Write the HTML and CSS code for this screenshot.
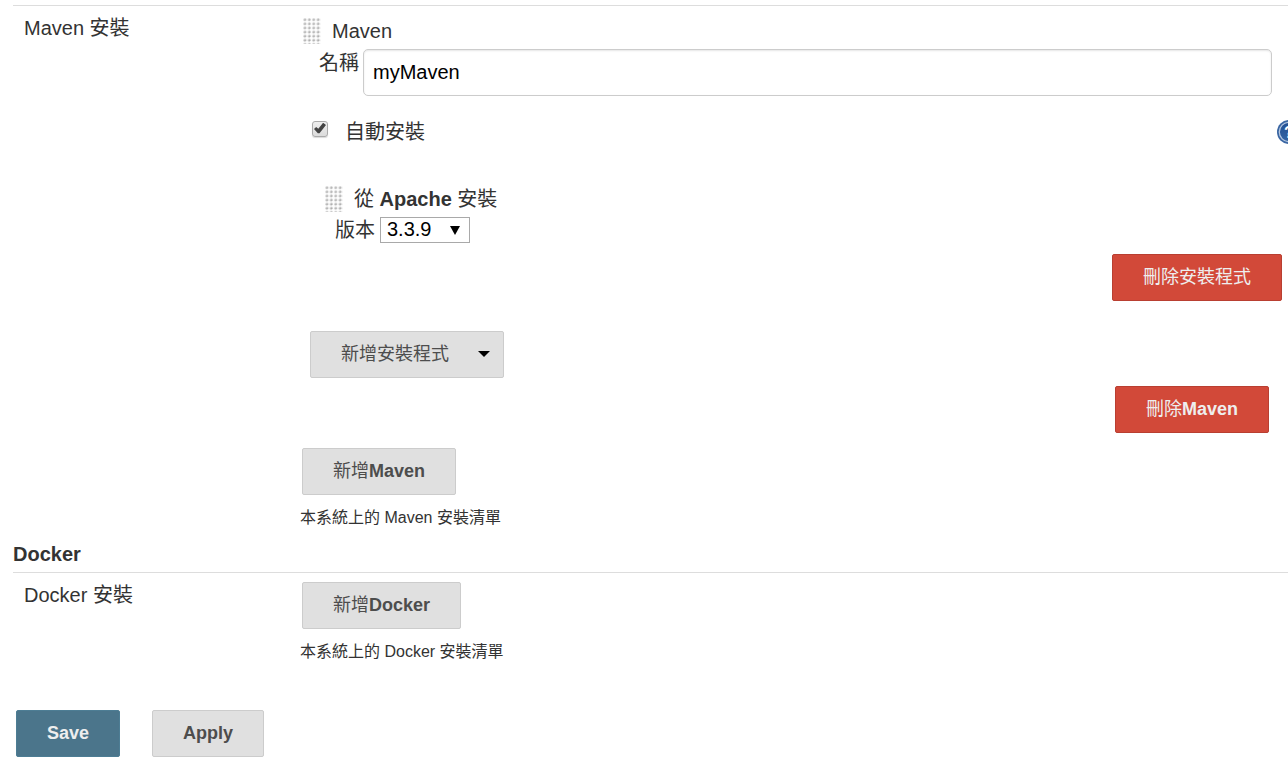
FILE: index.html
```
<!DOCTYPE html>
<html lang="zh-TW">
<head>
<meta charset="utf-8">
<title>Global Tool Configuration</title>
<link rel="stylesheet" href="styles.css">
</head>
<body>

<svg width="0" height="0" class="defs" aria-hidden="true">
  <defs>
    <linearGradient id="dot" x1="0" y1="0" x2="1" y2="1">
      <stop offset="0" stop-color="#f0f0f0"/>
      <stop offset="1" stop-color="#8c8c8c"/>
    </linearGradient>
    <pattern id="dots" width="4.4" height="4.1" patternUnits="userSpaceOnUse">
      <rect x="0.3" y="0.3" width="2.8" height="2.6" rx="1" fill="url(#dot)"/>
    </pattern>
    <linearGradient id="ball" x1="0" y1="0" x2="0" y2="1">
      <stop offset="0" stop-color="#224f92"/>
      <stop offset="1" stop-color="#3465a4"/>
    </linearGradient>
  </defs>
</svg>

<form id="config" name="config" onsubmit="return false">

<div class="section-row first">
  <div class="setting-name">Maven 安裝</div>
  <div class="setting-main">
    <div class="tool">
      <div class="drag-header">
        <svg class="grip" width="18" height="26"><rect width="18" height="26" fill="url(#dots)"/></svg>
        <span>Maven</span>
      </div>
      <div class="name-row">
        <label for="maven-name">名稱</label>
        <input type="text" id="maven-name" value="myMaven">
      </div>
      <div class="auto-row">
        <input type="checkbox" id="auto-install" checked>
        <label for="auto-install">自動安裝</label>
        <a class="help" href="#help" aria-label="說明">
          <svg width="24" height="24" viewBox="0 0 24 24">
            <circle cx="12" cy="12" r="12" fill="#3a66a3"/>
            <circle cx="12" cy="12" r="9.7" fill="url(#ball)" stroke="#b4c6df" stroke-width="1.3"/>
            <text x="12" y="18" text-anchor="middle" class="help-mark">?</text>
          </svg>
        </a>
      </div>
      <div class="installer">
        <div class="drag-header">
          <svg class="grip" width="18" height="26"><rect width="18" height="26" fill="url(#dots)"/></svg>
          <b><span class="zh">從</span> Apache <span class="zh">安裝</span></b>
        </div>
        <div class="version-row">
          <label for="version">版本</label>
          <span class="select">
            <select id="version">
              <option>3.3.9</option>
            </select>
          </span>
        </div>
        <div class="delete-row">
          <button type="button" class="danger"><span class="zh">刪除安裝程式</span></button>
        </div>
      </div>
      <button type="button" class="menu-button"><span class="zh">新增安裝程式</span></button>
      <div class="delete-row delete-tool">
        <button type="button" class="danger"><span class="zh">刪除</span>Maven</button>
      </div>
    </div>
    <button type="button" class="add"><span class="zh">新增</span>Maven</button>
    <div class="description">本系統上的 Maven 安裝清單</div>
  </div>
</div>

<h2>Docker</h2>
<div class="section-row">
  <div class="setting-name">Docker 安裝</div>
  <div class="setting-main">
    <button type="button" class="add"><span class="zh">新增</span>Docker</button>
    <div class="description">本系統上的 Docker 安裝清單</div>
  </div>
</div>

<div class="bottom">
  <button type="submit" class="primary">Save</button>
  <button type="button">Apply</button>
</div>

</form>

</body>
</html>
```

FILE: styles.css
```
body {
  margin: 0;
  background: #fff;
  color: #333;
  font-family: "Liberation Sans", Arial, "Noto Sans CJK TC", sans-serif;
  font-size: 20px;
  line-height: 28px;
  overflow-x: hidden;
}

.defs {
  position: absolute;
}

#config {
  padding: 5px 0 12px 13px;
}

.section-row {
  display: grid;
  grid-template-columns: 287px 1fr;
  border-top: 1px solid #ddd;
}

.setting-name {
  padding: 8px 0 0 11px;
}

.setting-main {
  padding-top: 9px;
}

h2 {
  margin: 12px 0 6px;
  font-size: 20px;
  line-height: 24px;
}

.zh {
  font-weight: normal;
}

/* draggable tool / installer */

.drag-header {
  display: flex;
  align-items: center;
  gap: 11px;
  margin-bottom: 2px;
  padding-left: 3px;
  line-height: 32px;
}

.name-row {
  display: flex;
  gap: 4px;
  padding: 0 16px 0 19px;
}

.name-row input {
  flex: 1;
  box-sizing: border-box;
  min-width: 0;
  height: 47px;
  padding: 0 9px;
  border: 1px solid #ccc;
  border-radius: 5px;
  box-shadow: inset 0 1px 2px rgba(0, 0, 0, 0.1);
  background: #fff;
  color: #000;
  font: inherit;
}

.auto-row {
  display: flex;
  align-items: center;
  margin-top: 22px;
  padding-left: 12px;
}

.auto-row input {
  -webkit-appearance: none;
  appearance: none;
  width: 16px;
  height: 16px;
  margin: 0 17px 7px 0;
  border: 1px solid #aaa;
  border-radius: 3px;
  box-shadow: 0 1px 1px rgba(0, 0, 0, 0.15);
  background: linear-gradient(#eee, #dcdcdc);
}

.auto-row input:checked::before {
  content: "";
  display: block;
  width: 12px;
  height: 11px;
  margin: 1px;
  background: #444;
  clip-path: polygon(0 60%, 18% 40%, 36% 56%, 76% 2%, 100% 22%, 46% 98%, 32% 98%);
}

.help {
  height: 24px;
  margin-left: auto;
  margin-right: -13px;
  line-height: 0;
}

.help-mark {
  fill: #fff;
  font-size: 16px;
  font-weight: bold;
}

.installer {
  margin-top: 37px;
  padding-left: 22px;
}

.version-row {
  display: flex;
  align-items: center;
  gap: 5px;
  padding-left: 13px;
  line-height: 26px;
}

.select {
  position: relative;
}

.select select {
  -webkit-appearance: none;
  appearance: none;
  display: block;
  box-sizing: border-box;
  width: 90px;
  height: 26px;
  padding: 0 6px 2px;
  border: 1px solid #a9a9a9;
  border-radius: 0;
  background: #fff;
  color: #000;
  font: inherit;
  line-height: 22px;
}

.select::after {
  content: "";
  position: absolute;
  right: 10px;
  top: 9px;
  border: 5px solid transparent;
  border-top: 9px solid #000;
  border-bottom: 0;
  pointer-events: none;
}

/* buttons */

button {
  height: 47px;
  padding: 0 30px 2px;
  border: 1px solid #ccc;
  border-radius: 2px;
  background: #e0e0e0;
  color: #4d4d4d;
  font: bold 18px/24px "Liberation Sans", Arial, "Noto Sans CJK TC", sans-serif;
  cursor: pointer;
}

button.danger {
  border-color: #b93f31;
  background: #d24939;
  color: #eee;
}

button.primary {
  border-color: #4d7d94;
  background: #4b758b;
  color: #eee;
}

.delete-row {
  display: flex;
  justify-content: flex-end;
  margin-top: 11px;
  padding-right: 6px;
}

.delete-tool {
  margin-top: 8px;
  padding-right: 19px;
}

.menu-button {
  display: flex;
  align-items: center;
  gap: 29px;
  margin: 30px 0 0 10px;
  padding-right: 13px;
}

.menu-button::after {
  content: "";
  border: 6px solid transparent;
  border-top-color: #000;
  border-bottom: 0;
}

.tool {
  margin-bottom: 15px;
}

.add {
  display: block;
  margin-left: 2px;
}

.description {
  margin-top: 11px;
  font-size: 16px;
  line-height: 24px;
}

.bottom {
  display: flex;
  gap: 32px;
  margin-top: 46px;
  padding-left: 3px;
}
```
